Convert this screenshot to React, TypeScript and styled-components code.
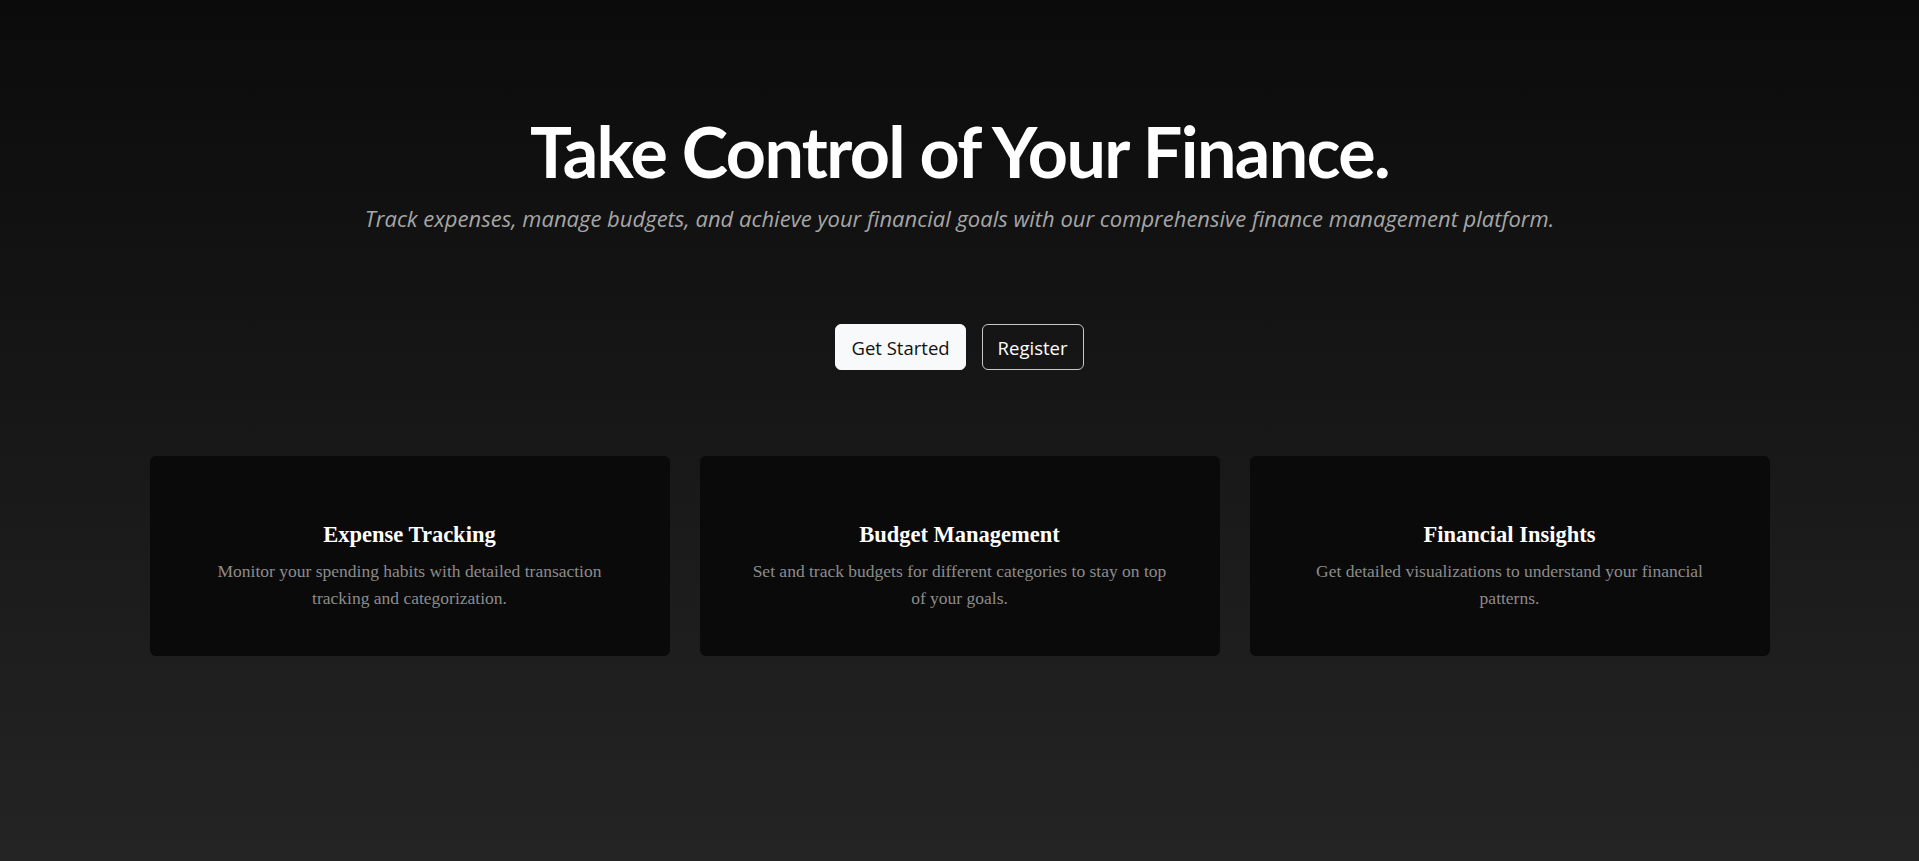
import React from "react";
import styled, { createGlobalStyle } from "styled-components";

const GlobalStyle = createGlobalStyle`
  html, body { margin: 0; padding: 0; }
  body {
    background: #0b0b0b;
    font-family: "Open Sans", "Noto Sans", sans-serif;
  }
`;

const Page = styled.main`
  min-height: 861px;
  box-sizing: border-box;
  background: linear-gradient(180deg, #0b0b0b 0%, #242424 100%);
  display: flex;
  flex-direction: column;
  align-items: center;
  padding-top: 108px;
`;

const Title = styled.h1`
  margin: 0;
  color: #ffffff;
  font-family: "Lato", "Open Sans", sans-serif;
  font-weight: 700;
  font-size: 70px;
  line-height: 86px;
  letter-spacing: -1.6px;
`;

const Subtitle = styled.p`
  margin: 8px 0 0;
  color: #a6a6a6;
  font-family: "Open Sans", sans-serif;
  font-style: italic;
  font-size: 22px;
  line-height: 32px;
`;

const Actions = styled.div`
  display: flex;
  gap: 16px;
  margin-top: 90px;
`;

const Button = styled.button<{ $variant: "solid" | "outline" }>`
  height: 46px;
  padding: 0 15px;
  border-radius: 6px;
  font-family: "Open Sans", sans-serif;
  font-size: 18.5px;
  cursor: pointer;
  border: 1px solid ${(p) => (p.$variant === "solid" ? "#f8f9fa" : "#c8c8c8")};
  background: ${(p) => (p.$variant === "solid" ? "#f8f9fa" : "transparent")};
  color: ${(p) => (p.$variant === "solid" ? "#111111" : "#ffffff")};
`;

const Features = styled.section`
  width: 1620px;
  display: grid;
  grid-template-columns: repeat(3, 1fr);
  gap: 30px;
  margin-top: 86px;
`;

const Card = styled.article`
  background: #0a0a0a;
  border-radius: 6px;
  height: 200px;
  box-sizing: border-box;
  padding: 65px 48px 0;
  text-align: center;
`;

const CardTitle = styled.h3`
  margin: 0 0 9px;
  color: #ffffff;
  font-family: "Liberation Serif", "Times New Roman", serif;
  font-weight: 700;
  font-size: 22.5px;
  line-height: 28px;
`;

const CardText = styled.p`
  margin: 0;
  color: #8c8c8c;
  font-family: "Liberation Serif", "Times New Roman", serif;
  font-size: 17.5px;
  line-height: 27px;
`;

const features = [
  {
    title: "Expense Tracking",
    text: "Monitor your spending habits with detailed transaction tracking and categorization.",
  },
  {
    title: "Budget Management",
    text: "Set and track budgets for different categories to stay on top of your goals.",
  },
  {
    title: "Financial Insights",
    text: "Get detailed visualizations to understand your financial patterns.",
  },
];

export default function App() {
  return (
    <>
      <GlobalStyle />
      <Page>
        <Title>Take Control of Your Finance.</Title>
        <Subtitle>
          Track expenses, manage budgets, and achieve your financial goals with our comprehensive finance management platform.
        </Subtitle>
        <Actions>
          <Button $variant="solid">Get Started</Button>
          <Button $variant="outline">Register</Button>
        </Actions>
        <Features>
          {features.map((f) => (
            <Card key={f.title}>
              <CardTitle>{f.title}</CardTitle>
              <CardText>{f.text}</CardText>
            </Card>
          ))}
        </Features>
      </Page>
    </>
  );
}
